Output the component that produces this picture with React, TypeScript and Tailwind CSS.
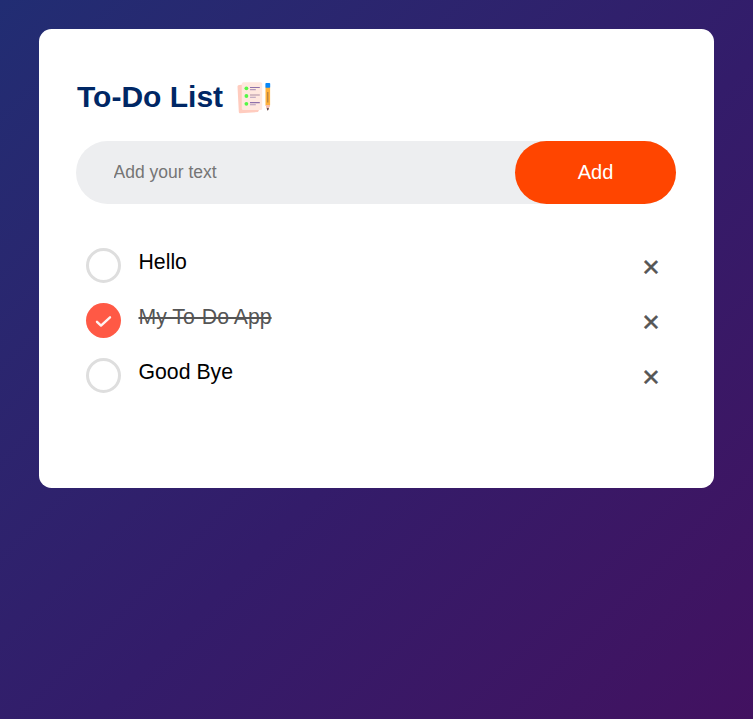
import { useState } from "react";

type Task = { id: number; text: string; done: boolean };

const initialTasks: Task[] = [
  { id: 1, text: "Hello", done: false },
  { id: 2, text: "My To-Do App", done: true },
  { id: 3, text: "Good Bye", done: false },
];

function ListIcon() {
  return (
    <svg width="38" height="38" viewBox="0 0 38 38" aria-hidden="true">
      <path d="M2.5 7.5 Q2.5 6 4 6 L9 5.5 L24 31 L23 33 L5 34.2 Q4 34.3 3.8 33Z" fill="#ffccbf" />
      <rect x="6.8" y="3.3" width="20.4" height="27.8" rx="1.5" fill="#ffe8df" />
      <g fill="#55f845">
        <circle cx="11.4" cy="9.3" r="1.9" />
        <circle cx="11.4" cy="17" r="1.9" />
        <circle cx="11.4" cy="24.8" r="1.9" />
      </g>
      <g strokeWidth="1.1">
        <path d="M15 8.5h9.8M15 23.6h9.8" stroke="#8f72aa" />
        <path d="M15 16h9.8" stroke="#b596a8" />
        <path d="M15 10.6h5.8M15 18.2h5.8M15 25.8h5.8" stroke="#b39abb" />
      </g>
      <path d="M30.5 8h4.6v18l-2.3 5.5-2.3-5.5Z" fill="#ffb13b" />
      <path d="M32.8 13v10.5" stroke="#a87943" strokeWidth="1.1" />
      <path d="M30.5 26h4.6l-2.3 5.5Z" fill="#f5bdb3" />
      <path d="M31.6 29.2h2.4l-1.2 2.5Z" fill="#3f2d40" />
      <rect x="30.4" y="4" width="4.8" height="4.8" rx=".8" fill="#0787f7" />
    </svg>
  );
}

function CheckMark({ done }: { done: boolean }) {
  if (!done) {
    return <span className="size-[35px] shrink-0 rounded-full border-[3px] border-[#dedede]" />;
  }
  return (
    <span className="flex size-[35px] shrink-0 items-center justify-center rounded-full bg-[#ff5945]">
      <svg width="35" height="35" viewBox="0 0 35 35" fill="none" aria-hidden="true">
        <path d="M11 18.8 L15 22.6 L24 14.3" stroke="#fff3f1" strokeWidth="2.4" strokeLinecap="round" strokeLinejoin="round" />
      </svg>
    </span>
  );
}

export default function App() {
  const [tasks, setTasks] = useState(initialTasks);
  const [draft, setDraft] = useState("");

  const add = () => {
    if (!draft.trim()) return;
    setTasks([...tasks, { id: Date.now(), text: draft, done: false }]);
    setDraft("");
  };
  const toggle = (id: number) =>
    setTasks(tasks.map((t) => (t.id === id ? { ...t, done: !t.done } : t)));

  return (
    <div className="min-h-screen bg-linear-135 from-[#212d73] via-[#331c6a] via-55% to-[#421160] pt-[29px] pr-[39px] pl-[39px] font-['Liberation_Sans',Arial,sans-serif]">
      <main className="h-[459px] w-[675px] rounded-[12.5px] bg-white pt-[50px] pr-[38px] pl-[37px]">
        <h1 className="flex h-[37px] items-center pl-px text-[30px] font-bold text-[#002765]">
          <span className="mb-0.5">To-Do List</span>
          <span className="ml-3">
            <ListIcon />
          </span>
        </h1>
        <div className="mt-[25px] flex h-[63px] items-center rounded-full bg-[#edeef0] pl-[37.5px]">
          <input
            className="min-w-0 flex-1 bg-transparent text-[17.5px] outline-none placeholder:text-[#757575]"
            placeholder="Add your text"
            value={draft}
            onChange={(e) => setDraft(e.target.value)}
          />
          <button className="h-[63px] w-[161px] rounded-full bg-[#ff4500] pb-0.5 text-xl text-white" onClick={add}>
            Add
          </button>
        </div>
        <ul className="mt-[34px]">
          {tasks.map((task) => (
            <li key={task.id} className="flex h-[55px] cursor-pointer items-center pr-2.5 pl-[10px]" onClick={() => toggle(task.id)}>
              <CheckMark done={task.done} />
              <span className={`mb-[5px] ml-[17.5px] flex-1 text-[21.25px] ${task.done ? "text-[#555] line-through" : "text-black"}`}>
                {task.text}
              </span>
              <button
                className="mt-0.5 size-[30px] text-[30px] leading-[30px] text-[#555] [-webkit-text-stroke:0.5px_#555]"
                onClick={() => setTasks(tasks.filter((t) => t.id !== task.id))}
              >
                ×
              </button>
            </li>
          ))}
        </ul>
      </main>
    </div>
  );
}
